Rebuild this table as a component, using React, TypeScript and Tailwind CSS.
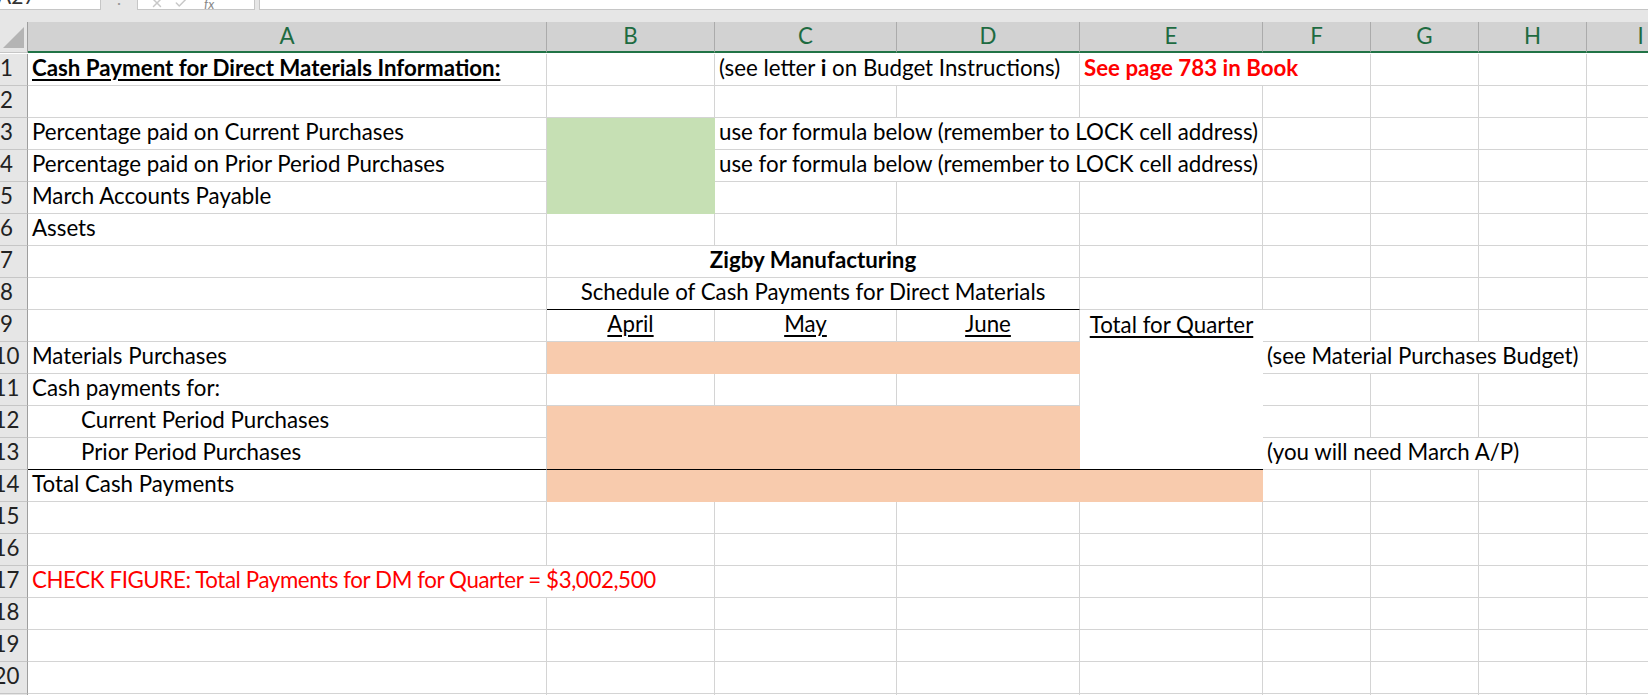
import type { ReactNode } from "react";
import { X, Check } from "lucide-react";
import { clsx } from "clsx";

type Kind = "grid" | "green" | "peach" | "white";

type Cell = {
  span?: 1 | 2 | 3 | 4;
  kind?: Kind;
  text?: ReactNode;
  center?: boolean;
  bold?: boolean;
  under?: boolean;
  red?: boolean;
  tight?: boolean;
  indent?: boolean;
  line?: boolean; // black bottom border
};

const COLS = ["A", "B", "C", "D", "E", "F", "G", "H", "I"];

const SPAN: Record<number, string> = {
  1: "",
  2: "col-span-2",
  3: "col-span-3",
  4: "col-span-4",
};

const blank = (n: number): Cell[] => Array.from({ length: n }, () => ({}));

const FORMULA_NOTE = "use for formula below (remember to LOCK cell address)";

const ROWS: Cell[][] = [
  // 1
  [
    { text: "Cash Payment for Direct Materials Information:", bold: true, under: true },
    {},
    {
      span: 2,
      text: (
        <>
          (see letter <b>i</b> on Budget Instructions)
        </>
      ),
    },
    { span: 2, text: "See page 783 in Book", bold: true, red: true },
    ...blank(3),
  ],
  // 2
  blank(9),
  // 3
  [
    { text: "Percentage paid on Current Purchases" },
    { kind: "green" },
    { span: 3, text: FORMULA_NOTE },
    ...blank(4),
  ],
  // 4
  [
    { text: "Percentage paid on Prior Period Purchases" },
    { kind: "green" },
    { span: 3, text: FORMULA_NOTE },
    ...blank(4),
  ],
  // 5
  [{ text: "March Accounts Payable" }, { kind: "green" }, ...blank(7)],
  // 6
  [{ text: "Assets" }, ...blank(8)],
  // 7
  [{}, { span: 3, text: "Zigby Manufacturing", center: true, bold: true }, ...blank(5)],
  // 8
  [
    {},
    { span: 3, text: "Schedule of Cash Payments for Direct Materials", center: true, line: true },
    ...blank(5),
  ],
  // 9
  [
    {},
    { text: "April", center: true, under: true },
    { text: "May", center: true, under: true },
    { text: "June", center: true, under: true },
    { kind: "white", text: "Total for Quarter", center: true, under: true },
    ...blank(4),
  ],
  // 10
  [
    { text: "Materials Purchases" },
    { span: 3, kind: "peach" },
    { kind: "white" },
    { span: 3, text: "(see Material Purchases Budget)" },
    {},
  ],
  // 11
  [{ text: "Cash payments for:" }, {}, {}, {}, { kind: "white" }, ...blank(4)],
  // 12
  [
    { text: "Current Period Purchases", indent: true },
    { span: 3, kind: "peach" },
    { kind: "white" },
    ...blank(4),
  ],
  // 13
  [
    { text: "Prior Period Purchases", indent: true, line: true },
    { span: 3, kind: "peach", line: true },
    { kind: "white", line: true },
    { span: 3, text: "(you will need March A/P)" },
    {},
  ],
  // 14
  [{ text: "Total Cash Payments" }, { span: 4, kind: "peach" }, ...blank(4)],
  // 15
  blank(9),
  // 16
  blank(9),
  // 17
  [
    {
      span: 2,
      text: "CHECK FIGURE: Total Payments for DM for Quarter = $3,002,500",
      red: true,
      tight: true,
    },
    ...blank(7),
  ],
  // 18
  blank(9),
  // 19
  blank(9),
  // 20
  blank(9),
  // 21
  blank(9),
];

function cellClass(c: Cell) {
  const kind = c.kind ?? "grid";
  return clsx(
    "flex items-end whitespace-nowrap pb-[5px] leading-[25px]",
    SPAN[c.span ?? 1],
    c.center ? "justify-center" : c.indent ? "pl-[53px]" : "pl-[4px]",
    kind === "grid" && "border-r border-r-[#d4d4d4]",
    kind === "grid" && !c.line && "border-b border-b-[#d4d4d4]",
    kind === "green" && "bg-[#c6e0b4]",
    kind === "peach" && "bg-[#f8cbad]",
    kind === "white" && "bg-white",
    c.line && "border-b border-b-black",
    c.bold && "font-bold",
    c.tight && "tracking-[-0.4px]",
    c.under && "underline decoration-[2px] underline-offset-[3px]",
    c.red ? "text-[#ff0000]" : "text-black",
  );
}

function FormulaStrip() {
  return (
    <div className="flex h-[22px] items-start bg-[#e6e6e6]">
      <div className="h-[10px] w-[101px] overflow-hidden border-r border-b border-[#c6c6c6] bg-white">
        <div className="-mt-[17px] -ml-[3px] text-[21px] leading-[25px] text-[#333]">A27</div>
      </div>
      <div className="flex h-[10px] w-[36px] justify-center overflow-hidden">
        <span className="-mt-[14px] text-[18px] leading-[20px] text-[#999]">⋮</span>
      </div>
      <div className="flex h-[10px] w-[118px] items-end gap-[10px] overflow-hidden border-x border-b border-[#c6c6c6] bg-white pl-[12px]">
        <X className="-mb-[1px] h-[14px] w-[14px] shrink-0 text-[#c8c8c8]" strokeWidth={2.5} />
        <Check className="-mb-[1px] h-[14px] w-[14px] shrink-0 text-[#c8c8c8]" strokeWidth={2.5} />
        <span className="-mb-[2px] pl-[6px] text-[13px] italic leading-[14px] text-[#888]">fx</span>
      </div>
      <div className="w-[4px]" />
      <div className="h-[10px] flex-1 border-l border-b border-[#c6c6c6] bg-white" />
    </div>
  );
}

export default function App() {
  return (
    <div className="h-[695px] w-[1648px] overflow-hidden bg-white font-['Lato','Noto_Sans',sans-serif] text-[22.3px]">
      <FormulaStrip />
      <div className="grid w-[1695px] grid-cols-[28px_519px_168px_182px_183px_183px_108px_108px_108px_108px] auto-rows-[32px]">
        {/* corner + column headers */}
        <div className="relative h-[31px] border-r border-b border-r-[#9e9e9e] border-b-[#c6c6c6] bg-[#e6e6e6]">
          <svg className="absolute right-[3px] bottom-[4px]" width="21" height="21" viewBox="0 0 21 21">
            <polygon points="21,0 21,21 0,21" fill="#b4b4b4" />
          </svg>
        </div>
        {COLS.map((col) => (
          <div
            key={col}
            className="flex h-[31px] items-center justify-center border-r border-b-2 border-r-[#ababab] border-b-[#217346] bg-[#d2d2d2] pb-[1px] text-[#1e6b41]"
          >
            {col}
          </div>
        ))}

        {ROWS.map((row, r) => (
          <div key={r} className="contents">
            <div className="flex items-end justify-center overflow-hidden border-r border-b border-r-[#9e9e9e] border-b-[#c6c6c6] bg-[#e6e6e6] pr-[14px] pb-[5px] leading-[25px] text-[#222]">
              <span>{r + 1}</span>
            </div>
            {row.map((c, i) => (
              <div key={i} className={cellClass(c)}>
                {c.text != null && <span>{c.text}</span>}
              </div>
            ))}
          </div>
        ))}
      </div>
    </div>
  );
}
